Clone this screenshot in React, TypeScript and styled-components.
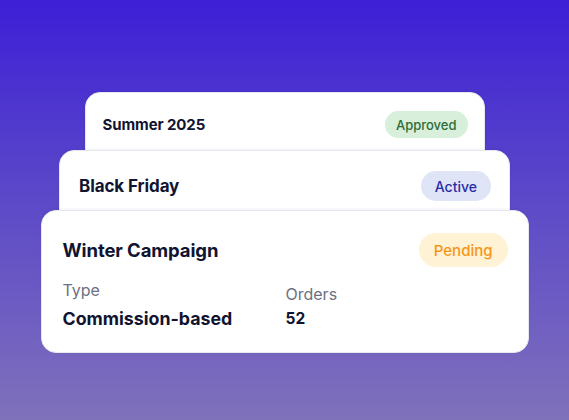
import React from "react";
import styled, { createGlobalStyle } from "styled-components";

const Global = createGlobalStyle`
  html, body { margin: 0; padding: 0; }
  body {
    font-family: Inter, "Noto Sans", "Liberation Sans", sans-serif;
    -webkit-font-smoothing: antialiased;
  }
`;

const Page = styled.div`
  width: 569px;
  height: 420px;
  background: linear-gradient(180deg, #3d1fd6 0%, #5a47c9 45%, #8071bb 100%);
  display: flex;
  flex-direction: column;
  align-items: center;
  padding-top: 92px;
  box-sizing: border-box;
  overflow: hidden;
`;

const Card = styled.div<{ $w: number; $h: number; $pad: number; $overlap: number; $z: number }>`
  position: relative;
  z-index: ${(p) => p.$z};
  width: ${(p) => p.$w}px;
  height: ${(p) => p.$h}px;
  margin-bottom: ${(p) => -p.$overlap}px;
  box-sizing: border-box;
  padding: ${(p) => p.$pad - 1}px ${(p) => p.$pad - 2}px 0 ${(p) => p.$pad - 1}px;
  background: #ffffff;
  border: 1px solid #e4e8f0;
  border-radius: 15px;
  box-shadow: 0 -1px 3px rgba(20, 20, 60, 0.06);
`;

const Header = styled.div`
  display: flex;
  align-items: center;
  justify-content: space-between;
  padding-top: 1px;
`;

const Title = styled.div<{ $size: number }>`
  font-size: ${(p) => p.$size}px;
  font-weight: 700;
  color: #111430;
  letter-spacing: -0.1px;
`;

const tones = {
  green: { bg: "#d8efdb", fg: "#2f6d36" },
  blue: { bg: "#dfe4f6", fg: "#2a2ea6" },
  orange: { bg: "#fff2d5", fg: "#f5961a" },
};

const Badge = styled.span<{ $tone: keyof typeof tones; $h: number; $px: number; $size: number }>`
  display: inline-flex;
  align-items: center;
  height: ${(p) => p.$h}px;
  padding: 0 ${(p) => p.$px}px;
  border-radius: ${(p) => p.$h / 2}px;
  background: ${(p) => tones[p.$tone].bg};
  color: ${(p) => tones[p.$tone].fg};
  font-size: ${(p) => p.$size}px;
  font-weight: 500;
`;

const Fields = styled.div`
  display: grid;
  grid-template-columns: 223px 1fr;
  margin-top: 13px;
`;

const Field = styled.div<{ $shift: number }>`
  display: flex;
  flex-direction: column;
  padding-top: ${(p) => p.$shift}px;
`;

const Label = styled.div`
  font-size: 16px;
  line-height: 20px;
  color: #6c7082;
  font-weight: 400;
`;

const Value = styled.div<{ $size: number; $gap: number }>`
  margin-top: ${(p) => p.$gap}px;
  font-size: ${(p) => p.$size}px;
  line-height: 20px;
  font-weight: 700;
  color: #111430;
`;

export default function App() {
  return (
    <>
      <Global />
      <Page>
        <Card $w={400} $h={80} $pad={18} $overlap={22} $z={1}>
          <Header>
            <Title $size={15}>Summer 2025</Title>
            <Badge $tone="green" $h={27} $px={11} $size={13}>Approved</Badge>
          </Header>
        </Card>
        <Card $w={451} $h={84} $pad={20} $overlap={24} $z={2}>
          <Header>
            <Title $size={17}>Black Friday</Title>
            <Badge $tone="blue" $h={30} $px={14} $size={14}>Active</Badge>
          </Header>
        </Card>
        <Card $w={488} $h={143} $pad={22} $overlap={0} $z={3}>
          <Header>
            <Title $size={18.5}>Winter Campaign</Title>
            <Badge $tone="orange" $h={34} $px={15} $size={15}>Pending</Badge>
          </Header>
          <Fields>
            <Field $shift={0}>
              <Label>Type</Label>
              <Value $size={17.8} $gap={9}>Commission-based</Value>
            </Field>
            <Field $shift={4}>
              <Label>Orders</Label>
              <Value $size={15.5} $gap={5}>52</Value>
            </Field>
          </Fields>
        </Card>
      </Page>
    </>
  );
}
